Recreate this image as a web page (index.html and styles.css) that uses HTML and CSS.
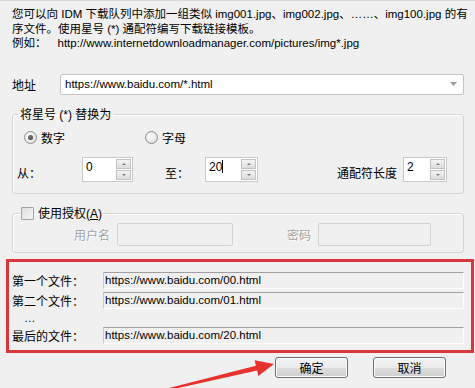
FILE: index.html
```html
<!DOCTYPE html>
<html lang="zh-CN">
<head>
<meta charset="utf-8">
<title>添加批量下载</title>
<link rel="stylesheet" href="styles.css">
</head>
<body>
<div class="dialog">
  <p class="desc"><span class="line">您可以向 IDM 下载队列中添加一组类似 img001.jpg、img002.jpg、……、img100.jpg 的有</span><span class="line">序文件。使用星号 (*) 通配符编写下载链接模板。</span><span class="line">例如：<span class="eg">http://www.internetdownloadmanager.com/pictures/img*.jpg</span></span></p>

  <div class="addr-row">
    <span class="addr-label">地址</span>
    <div class="combo">
      <span class="combo-text">https://www.baidu.com/*.html</span>
      <svg class="combo-arrow" width="7" height="4" viewBox="0 0 7 4"><path d="M0 0h7L3.5 4z" fill="#9a9a9a"/></svg>
    </div>
  </div>

  <fieldset class="group group-replace">
    <legend>将星号 (*) 替换为</legend>
    <div class="radio-row">
      <label class="radio-item"><span class="radio checked"></span>数字</label>
      <label class="radio-item second"><span class="radio"></span>字母</label>
    </div>
    <div class="spin-row">
      <span class="lbl from">从：</span>
      <div class="spin s-from"><span class="spin-val">0</span><span class="spin-btns"><span class="sb up"></span><span class="sb down"></span></span></div>
      <span class="lbl to">至：</span>
      <div class="spin s-to"><span class="spin-val">20<span class="caret"></span></span><span class="spin-btns"><span class="sb up"></span><span class="sb down"></span></span></div>
      <span class="lbl len">通配符长度</span>
      <div class="spin s-len"><span class="spin-val">2</span><span class="spin-btns"><span class="sb up"></span><span class="sb down"></span></span></div>
    </div>
  </fieldset>

  <fieldset class="group group-auth">
    <legend><span class="checkbox"></span>使用授权(<u>A</u>)</legend>
    <div class="auth-row">
      <span class="dis-label user">用户名</span>
      <div class="dis-input user-in"></div>
      <span class="dis-label pass">密码</span>
      <div class="dis-input pass-in"></div>
    </div>
  </fieldset>

  <div class="result-box">
    <div class="res-row"><span class="res-label">第一个文件：</span><div class="res-field">https://www.baidu.com/00.html</div></div>
    <div class="res-row"><span class="res-label">第二个文件：</span><div class="res-field">https://www.baidu.com/01.html</div></div>
    <div class="dots-row">…</div>
    <div class="res-row"><span class="res-label">最后的文件：</span><div class="res-field">https://www.baidu.com/20.html</div></div>
  </div>

  <div class="btn-row">
    <button class="btn">确定</button>
    <button class="btn">取消</button>
  </div>

  <svg class="arrow" width="475" height="388" viewBox="0 0 475 388">
    <polygon points="167.9,387.3 255.9,364.7 254.7,359.3 274,363 258.3,374.9 257.1,369.5 168.3,389.2" fill="#e8322e"/>
  </svg>
</div>
</body>
</html>
```

FILE: styles.css
```css
html, body {
  margin: 0;
  padding: 0;
  background: #f0f0f0;
}

.dialog {
  position: relative;
  width: 475px;
  height: 388px;
  box-sizing: border-box;
  padding: 6px 11px 0 12px;
  font-family: "Liberation Sans", "Noto Sans CJK SC", sans-serif;
  font-size: 11.5px;
  color: #000;
  overflow: hidden;
  border-top: 1px solid #d9d9d9;
}

.desc {
  margin: 0;
  line-height: 14.5px;
  white-space: nowrap;
}

.desc .line {
  display: block;
}

.desc .eg {
  margin-left: 11px;
}

.addr-row {
  display: flex;
  align-items: center;
  margin-top: 23px;
  height: 21px;
}

.addr-label {
  width: 48px;
  font-size: 12px;
}

.combo {
  flex: 1;
  height: 21px;
  box-sizing: border-box;
  background: #fff;
  border: 1px solid #c5c5c5;
  border-radius: 2px;
  display: flex;
  align-items: center;
  padding: 0 6px 0 4px;
}

.combo-text {
  flex: 1;
}

.group {
  margin: 13px 0 0 0;
  padding: 0;
  border: 1px solid #d5d5d5;
  border-radius: 3px;
  box-shadow: inset 1px 1px 0 #fff;
}

.group legend {
  margin-left: 5px;
  padding: 0 2px;
  line-height: 14px;
  font-size: 12px;
  display: flex;
  align-items: center;
}

.group-replace {
  height: 86px;
  box-sizing: border-box;
}

.radio-row {
  display: flex;
  align-items: center;
  height: 16px;
  margin-top: 8px;
  padding-left: 11px;
}

.radio-item {
  display: flex;
  align-items: center;
  font-size: 12px;
}

.radio-item.second {
  margin-left: 80px;
}

.radio {
  width: 11px;
  height: 11px;
  border: 1px solid #8e8f8f;
  border-radius: 50%;
  background: radial-gradient(circle at 40% 40%, #fff 0, #e6e6e6 60%, #d0d0d0 100%);
  margin-right: 4px;
  box-sizing: content-box;
  position: relative;
}

.radio.checked::after {
  content: "";
  position: absolute;
  left: 3px;
  top: 3px;
  width: 5px;
  height: 5px;
  border-radius: 50%;
  background: radial-gradient(circle at 40% 40%, #7a7a7a, #333);
}

.spin-row {
  display: flex;
  align-items: center;
  margin-top: 11px;
  height: 25px;
}

.lbl {
  font-size: 12px;
  padding-top: 6px;
}

.lbl.from {
  margin-left: 4px;
  width: 65px;
}

.lbl.to {
  margin-left: 32px;
  width: 40px;
}

.lbl.len {
  margin-left: 79px;
  width: 66px;
}

.spin {
  display: flex;
  height: 25px;
  box-sizing: border-box;
  background: #fff;
  border: 1px solid #c9c9c9;
}

.s-from { width: 51px; }
.s-to { width: 53px; }
.s-len { width: 44px; }

.spin-val {
  flex: 1;
  padding: 2px 0 0 3px;
  font-size: 12px;
  line-height: 14px;
}

.caret {
  display: inline-block;
  width: 1px;
  height: 13px;
  background: #000;
  vertical-align: -2px;
}

.spin-btns {
  display: flex;
  flex-direction: column;
  width: 15px;
  padding: 1px;
  gap: 1px;
}

.sb {
  flex: 1;
  border: 1px solid #c2c2c2;
  background: linear-gradient(#f4f4f4, #dcdcdc);
  position: relative;
}

.sb::after {
  content: "";
  position: absolute;
  left: 50%;
  top: 50%;
  margin-left: -2px;
  border-left: 2px solid transparent;
  border-right: 2px solid transparent;
}

.sb.up::after {
  margin-top: -1px;
  border-bottom: 2px solid #7a7a7a;
}

.sb.down::after {
  margin-top: -1px;
  border-top: 2px solid #7a7a7a;
}

.checkbox {
  width: 11px;
  height: 11px;
  border: 1px solid #a3a3a3;
  border-radius: 1px;
  background: linear-gradient(135deg, #dcdcdc, #f8f8f8);
  margin-right: 4px;
}

.group-auth {
  height: 46px;
  box-sizing: border-box;
}

.group-auth legend {
  margin-left: 7px;
  padding: 0 1px;
}

.auth-row {
  display: flex;
  align-items: center;
  margin-top: 2px;
  height: 23px;
}

.dis-label {
  color: #a3a3a3;
  text-shadow: 1px 1px 0 #fff;
  font-size: 12px;
  text-align: right;
}

.dis-label.user {
  width: 97px;
}

.dis-label.pass {
  width: 66px;
  margin-left: 12px;
}

.dis-input {
  height: 23px;
  box-sizing: border-box;
  border: 1px solid #d2d2d2;
  border-radius: 2px;
  background: #f0f0f0;
  margin-left: 7px;
}

.user-in { width: 116px; }
.pass-in { width: 113px; }

.result-box {
  margin: 6px -10px 0 -6px;
  border: 3px solid #d9373d;
  padding: 10px 7px 6px 3px;
  display: flex;
  flex-direction: column;
}

.res-row {
  display: flex;
  align-items: center;
  height: 17px;
}

.res-row + .res-row {
  margin-top: 3px;
}

.res-label {
  width: 91px;
  font-size: 12px;
}

.res-field {
  flex: 1;
  height: 17px;
  box-sizing: border-box;
  border-top: 1px solid #a0a0a0;
  border-left: 1px solid #c8c8c8;
  border-bottom: 1px solid #fff;
  border-right: 1px solid #fff;
  padding-left: 1px;
  line-height: 15px;
  background: #f0f0f0;
}

.dots-row {
  height: 18px;
  line-height: 18px;
  padding-left: 12px;
  margin-bottom: 0;
}

.dots-row + .res-row {
  margin-top: 0;
}

.btn-row {
  display: flex;
  justify-content: flex-end;
  gap: 25px;
  margin: 4px 18px 0 0;
}

.btn {
  width: 73px;
  height: 21px;
  border: 1px solid #707070;
  border-radius: 3px;
  background: linear-gradient(#f2f2f2 0, #ebebeb 50%, #dddddd 50%, #cfcfcf 100%);
  font-family: "Liberation Sans", "Noto Sans CJK SC", sans-serif;
  font-size: 12px;
  color: #000;
  padding: 0;
  box-shadow: inset 0 0 0 1px #fcfcfc;
}

.arrow {
  position: absolute;
  left: 0;
  top: 0;
  pointer-events: none;
}
```
